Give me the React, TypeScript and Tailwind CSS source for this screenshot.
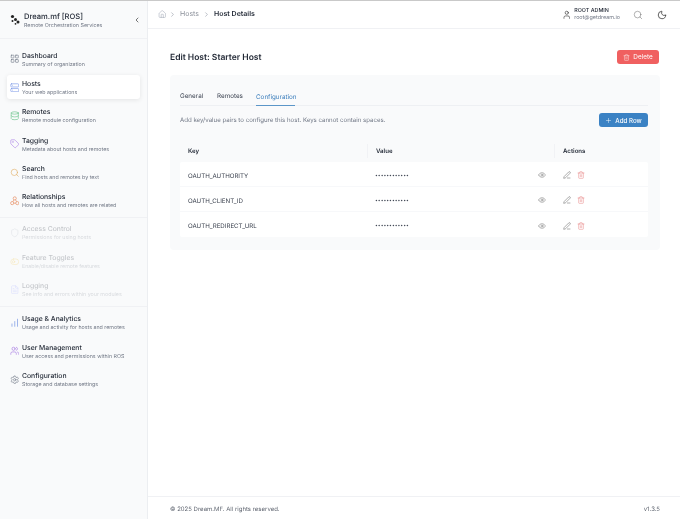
import { ChevronLeft, ChevronRight, LayoutGrid, Server, Database, Tag, Search, Shield, ToggleLeft, FileText, ChartNoAxesColumnIncreasing, Users, Settings, Home, User, Moon, Trash2, Plus, Eye, PenLine } from "lucide-react";
import type { ComponentType } from "react";

type Item = { icon: ComponentType<any>; title: string; sub: string; color: string; active?: boolean; off?: boolean };

function Relations({ size, strokeWidth, className }: { size?: number; strokeWidth?: number; className?: string }) {
  return (
    <svg width={size} height={size} viewBox="0 0 24 24" fill="none" stroke="currentColor" strokeWidth={strokeWidth} className={className}>
      <circle cx="12" cy="6" r="4" />
      <circle cx="5.5" cy="18" r="4" />
      <circle cx="18.5" cy="18" r="4" />
      <path d="M10 9.5 7.5 14.5M14 9.5l2.5 5M9.5 18h5" />
    </svg>
  );
}

const groupA: Item[] = [
  { icon: LayoutGrid, title: "Dashboard", sub: "Summary of organization", color: "text-gray-500" },
  { icon: Server, title: "Hosts", sub: "Your web applications", color: "text-[#6f8fe6]", active: true },
  { icon: Database, title: "Remotes", sub: "Remote module configuration", color: "text-[#5dbf80]" },
  { icon: Tag, title: "Tagging", sub: "Metadata about hosts and remotes", color: "text-[#a97fe6]" },
  { icon: Search, title: "Search", sub: "Find hosts and remotes by text", color: "text-[#e0ac60]" },
  { icon: Relations, title: "Relationships", sub: "How all hosts and remotes are related", color: "text-[#e5814f]" },
];
const groupB: Item[] = [
  { icon: Shield, title: "Access Control", sub: "Permissions for using hosts", color: "text-gray-400", off: true },
  { icon: ToggleLeft, title: "Feature Toggles", sub: "Enable/disable remote features", color: "text-yellow-500", off: true },
  { icon: FileText, title: "Logging", sub: "See info and errors within your modules", color: "text-indigo-400", off: true },
];
const groupC: Item[] = [
  { icon: ChartNoAxesColumnIncreasing, title: "Usage & Analytics", sub: "Usage and activity for hosts and remotes", color: "text-[#5f86e0]" },
  { icon: Users, title: "User Management", sub: "User access and permissions within ROS", color: "text-[#a06fe0]" },
  { icon: Settings, title: "Configuration", sub: "Storage and database settings", color: "text-gray-500" },
];

function NavItem({ item }: { item: Item }) {
  const I = item.icon;
  return (
    <div className={`flex items-center h-[24px] mx-[7px] pl-[2.5px] gap-[3px] rounded-[3px] ${item.active ? "bg-white shadow-[0_1px_5px_rgba(0,0,0,0.09)]" : ""} ${item.off ? "opacity-25" : ""}`}>
      <I size={9.5} strokeWidth={1.5} className={`${item.color} shrink-0`} />
      <div className="min-w-0">
        <div className="text-[6.8px] leading-[11px] font-medium text-[#1f2633] whitespace-nowrap">{item.title}</div>
        <div className="text-[5.3px] leading-[8px] text-[#6f7684] whitespace-nowrap">{item.sub}</div>
      </div>
    </div>
  );
}

function Logo() {
  return (
    <svg width="10" height="11" viewBox="0 0 10 11" className="text-[#222] shrink-0">
      <circle cx="2.5" cy="2.5" r="1.6" fill="currentColor" />
      <circle cx="5.5" cy="5.5" r="1.5" fill="currentColor" />
      <circle cx="2.5" cy="7" r="1" fill="currentColor" />
      <circle cx="8" cy="8" r="1.5" fill="currentColor" />
      <circle cx="5.5" cy="9.8" r="0.9" fill="currentColor" />
    </svg>
  );
}

const rows = ["OAUTH_AUTHORITY", "OAUTH_CLIENT_ID", "OAUTH_REDIRECT_URL"];

export default function App() {
  return (
    <div className="w-[680px] h-[519px] flex flex-col overflow-hidden bg-white font-['Inter',sans-serif] [text-rendering:geometricPrecision] blur-[0.35px]">
      <div className="h-px bg-[#c9c9c9] shrink-0" />
      <div className="flex flex-1 min-h-0">
        <aside className="w-[148px] shrink-0 bg-[#f9fafb] border-r border-[#eceef1] flex flex-col">
          <div className="h-[38px] shrink-0 flex items-center pl-[10px] pr-[6px] border-b border-[#f0f1f4]">
            <Logo />
            <div className="ml-[4px] flex-1 min-w-0 mt-[1px]">
              <div className="text-[7.6px] leading-[11px] font-medium text-[#1f2633] whitespace-nowrap">Dream.mf [ROS]</div>
              <div className="text-[5.35px] leading-[8px] text-[#6f7684] whitespace-nowrap">Remote Orchestration Services</div>
            </div>
            <ChevronLeft size={8} strokeWidth={2} className="text-[#333]" />
          </div>
          <nav className="pt-[7px] flex flex-col">
            <div className="flex flex-col gap-[4.4px] pt-[1px] pb-[4px] border-b border-[#f0f1f4]">
              {groupA.map((i) => <NavItem key={i.title} item={i} />)}
            </div>
            <div className="flex flex-col gap-[4.4px] pt-[3px] pb-[4px] border-b border-[#f0f1f4]">
              {groupB.map((i) => <NavItem key={i.title} item={i} />)}
            </div>
            <div className="flex flex-col gap-[4.4px] pt-[4px]">
              {groupC.map((i) => <NavItem key={i.title} item={i} />)}
            </div>
          </nav>
        </aside>

        <div className="flex-1 min-w-0 flex flex-col">
          <header className="h-[28px] shrink-0 border-b border-[#f0f1f4] flex items-center pl-[10px] pr-[13px]">
            <Home size={8.5} strokeWidth={1.4} className="text-gray-400" />
            <ChevronRight size={7} strokeWidth={1.5} className="text-gray-500 ml-[2px]" />
            <span className="ml-[4.5px] text-[7px] text-[#8b909a]">Hosts</span>
            <ChevronRight size={7} strokeWidth={1.5} className="text-gray-500 ml-[3.5px]" />
            <span className="ml-[4.5px] text-[7px] font-semibold text-[#1f2633]">Host Details</span>
            <div className="ml-auto flex items-center">
              <User size={9.5} strokeWidth={1.6} className="text-[#333]" />
              <div className="ml-[3px] mr-[13px] mt-[1px]">
                <div className="text-[5.4px] leading-[7px] font-medium text-[#1f2633]">ROOT ADMIN</div>
                <div className="text-[5.4px] leading-[7px] text-[#6f7684]">root@getdream.io</div>
              </div>
              <Search size={10} strokeWidth={1.2} className="text-[#666]" />
              <Moon size={10} strokeWidth={1.7} className="text-[#222] ml-[14px]" />
            </div>
          </header>

          <main className="flex-1 min-h-0 pl-[22px] pr-[20px] pt-[21px]">
            <div className="flex items-center justify-between h-[14px]">
              <h1 className="text-[8.5px] font-semibold text-[#1f2633] mt-[2px]">Edit Host: Starter Host</h1>
              <button className="h-[14px] w-[42px] mr-px rounded-[3px] bg-[#f06060] text-white text-[6.4px] flex items-center justify-center gap-[3px]">
                <Trash2 size={7} strokeWidth={1.4} /> <span className="mt-[1px]">Delete</span>
              </button>
            </div>

            <section className="mt-[11px] bg-[#f9fafb] rounded-[4px] h-[175px] pl-[10px] pr-[12px]">
              <div className="flex border-b border-[#eef0f3] h-[31px] items-end text-[6.3px] text-[#3f4654]">
                <div className="h-[21px] pt-[5px] flex items-center w-[23px]">General</div>
                <div className="h-[21px] pt-[5px] flex items-center ml-[14px] w-[25px]">Remotes</div>
                <div className="h-[21px] pt-[5px] ml-[14px] -mb-px border-b border-[#5b96c8] text-[#3d7fbd] flex items-center w-[39px]">Configuration</div>
              </div>
              <div className="flex items-center justify-between h-[28px]">
                <div className="text-[6.1px] text-[#6f7684] mt-[2px]">Add key/value pairs to configure this host. Keys cannot contain spaces.</div>
                <button className="h-[14px] w-[49px] rounded-[3px] bg-[#3b82c4] text-white text-[6.2px] font-medium flex items-center justify-center gap-[3px]">
                  <Plus size={7} strokeWidth={1.6} /> <span className="mt-[1px]">Add Row</span>
                </button>
              </div>
              <div className="grid grid-cols-[187px_187px_1fr] h-[24px] pt-[2px] mt-[4px] items-center text-[6.1px] font-semibold text-[#1f2633]">
                <div className="pl-[8px] pt-[2px]">Key</div>
                <div className="pl-[8px] pt-[2px] border-l border-[#f1f2f5] h-[14px] flex items-center">Value</div>
                <div className="pl-[8px] pt-[2px] border-l border-[#f1f2f5] h-[14px] flex items-center">Actions</div>
              </div>
              <div className="bg-white rounded-[2px]">
                {rows.map((r) => (
                  <div key={r} className="grid grid-cols-[187px_187px_1fr] h-[25px] pt-[2px] items-center border-b border-[#f7f8fa] last:border-b-0">
                    <div className="pl-[8px] pt-[3px] text-[6.15px] text-[#363d4a]">{r}</div>
                    <div className="pl-[8px] pr-[8px] flex items-center justify-between">
                      <span className="pt-[3px] text-[5px] text-[#444b58]">••••••••••••</span>
                      <Eye size={8} strokeWidth={1.6} className="text-[#777]" />
                    </div>
                    <div className="pl-[9px] flex items-center gap-[6px]">
                      <PenLine size={8} strokeWidth={1.6} className="text-[#666]" />
                      <Trash2 size={8} strokeWidth={1.4} className="text-[#e57a7a]" />
                    </div>
                  </div>
                ))}
              </div>
            </section>
          </main>

          <footer className="h-[23px] shrink-0 pt-[3px] border-t border-[#f0f1f4] flex items-center justify-between pl-[22px] pr-[20px] text-[6px] text-[#5f6570]">
            <span>© 2025 Dream.MF. All rights reserved.</span>
            <span>v1.3.5</span>
          </footer>
        </div>
      </div>
    </div>
  );
}
